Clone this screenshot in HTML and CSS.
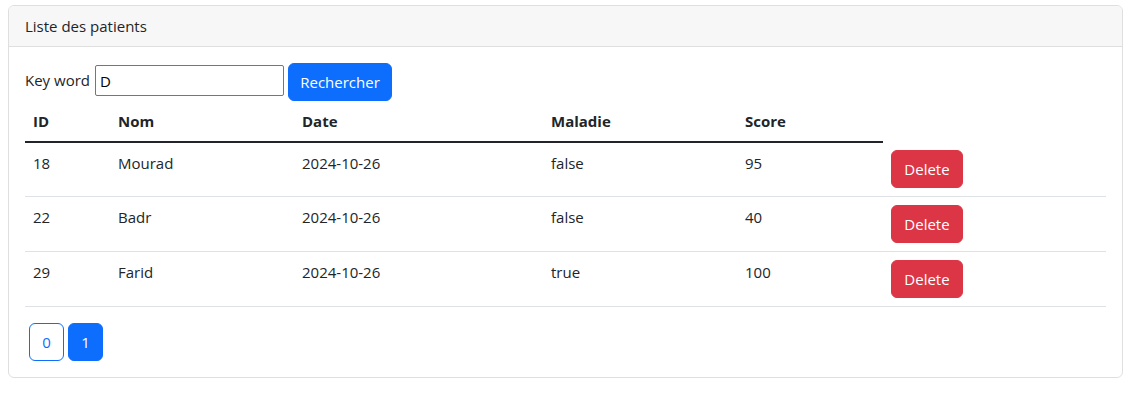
FILE: index.html
```html
<!DOCTYPE html>
<html lang="fr">
<head>
<meta charset="utf-8">
<title>Liste des patients</title>
<link rel="stylesheet" href="styles.css">
</head>
<body>
<div class="card">
  <div class="card-header">Liste des patients</div>
  <div class="card-body">
    <form class="search">
      <label class="search-label">Key word</label>
      <input class="search-input" type="text" value="D">
      <button class="btn btn-primary btn-search" type="button">Rechercher</button>
    </form>
    <table class="table">
      <colgroup>
        <col class="c-id"><col class="c-nom"><col class="c-date"><col class="c-mal"><col class="c-score"><col class="c-act">
      </colgroup>
      <thead>
        <tr><th>ID</th><th>Nom</th><th>Date</th><th>Maladie</th><th>Score</th></tr>
      </thead>
      <tbody>
        <tr><td>18</td><td>Mourad</td><td>2024-10-26</td><td>false</td><td>95</td><td><button class="btn btn-danger" type="button">Delete</button></td></tr>
        <tr><td>22</td><td>Badr</td><td>2024-10-26</td><td>false</td><td>40</td><td><button class="btn btn-danger" type="button">Delete</button></td></tr>
        <tr><td>29</td><td>Farid</td><td>2024-10-26</td><td>true</td><td>100</td><td><button class="btn btn-danger" type="button">Delete</button></td></tr>
      </tbody>
    </table>
    <ul class="pages">
      <li><button class="btn btn-page btn-outline" type="button">0</button></li>
      <li><button class="btn btn-page btn-primary" type="button">1</button></li>
    </ul>
  </div>
</div>
</body>
</html>
```
FILE: styles.css
```css
* { box-sizing: border-box; }
html, body { background: #fff; }
body {
  margin: 0;
  padding: 5px 12px 0 8px;
  font-family: "Open Sans", "Noto Sans", sans-serif;
  font-size: 15px;
  line-height: 24px;
  color: #212529;
}
.card {
  border: 1px solid #dfdfdf;
  border-radius: 6px;
  background: #fff;
  overflow: hidden;
}
.card-header {
  height: 41px;
  padding: 8px 16px;
  background: #f7f7f7;
  border-bottom: 1px solid #dfdfdf;
}
.card-body {
  padding: 16px;
}
.search {
  display: flex;
  align-items: flex-start;
  margin: 0;
  height: 38px;
}
.search-label { margin: 5px 5px 0 0; }
.search-input {
  width: 189px;
  height: 31px;
  margin: 2px 4px 0 0;
  padding: 1px 4px;
  font: inherit;
  color: #000;
  border: 1px solid #767676;
  border-radius: 2px;
}
.btn {
  display: inline-block;
  height: 38px;
  padding: 6px 12px;
  font: inherit;
  line-height: 24px;
  border: 1px solid transparent;
  border-radius: 6px;
  cursor: pointer;
}
.btn-search { width: 104px; padding: 6px 0; text-align: center; }
.btn-primary { background: #0d6efd; border-color: #0d6efd; color: #fff; }
.btn-danger { background: #dc3545; border-color: #dc3545; color: #fff; width: 72px; padding: 6px 0; text-align: center; }
.btn-outline { background: #fff; border-color: #0d6efd; color: #0d6efd; }
.table {
  width: 100%;
  border-collapse: collapse;
  margin-bottom: 16px;
}
.c-id { width: 85px; }
.c-nom { width: 184px; }
.c-date { width: 249px; }
.c-mal { width: 194px; }
.c-score { width: 146px; }
.table th, .table td {
  text-align: left;
  vertical-align: top;
  padding: 8px;
}
.table th {
  font-weight: 700;
  border-bottom: 2px solid #212529;
}
.table td { border-bottom: 1px solid #dee2e6; }
.pages {
  list-style: none;
  margin: 0;
  padding: 0;
  display: flex;
}
.pages li { margin-left: 4px; }
.btn-page { width: 35px; padding: 6px 0; text-align: center; }
```
